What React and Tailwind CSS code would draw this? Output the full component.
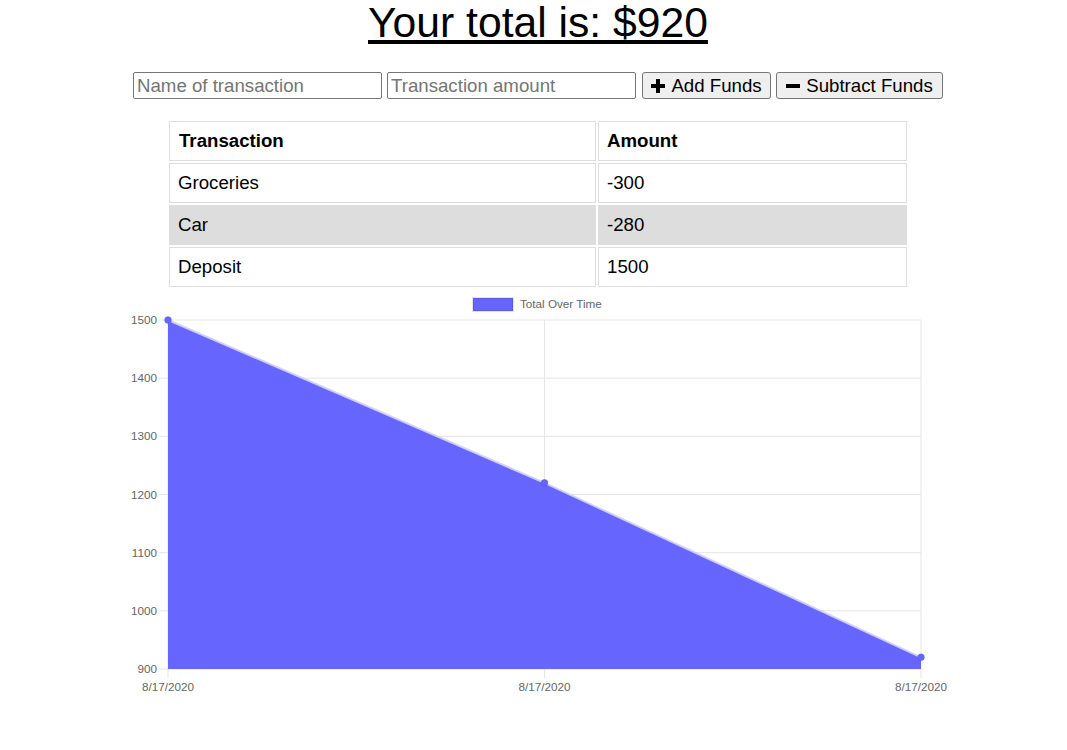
import React from 'react'

const transactions = [
  { name: 'Groceries', value: -300 },
  { name: 'Car', value: -280 },
  { name: 'Deposit', value: 1500 }
]

// chart geometry in page pixels
const left = 168
const right = 921
const top = 320
const bottom = 669
const yMin = 900
const yMax = 1500
const yPos = (v) => bottom - ((v - yMin) / (yMax - yMin)) * (bottom - top)

function Chart() {
  const totals = [1500, 1220, 920]
  const xs = [left, (left + right) / 2, right]
  const ticks = [1500, 1400, 1300, 1200, 1100, 1000, 900]
  const pts = totals.map((v, i) => [xs[i], yPos(v)])
  const area = [...pts, [right, bottom], [left, bottom]].map((p) => p.join(',')).join(' ')
  const line = pts.map((p) => p.join(',')).join(' ')

  return (
    <svg
      viewBox="100 290 876 420"
      className="block w-[876px] h-[420px] mx-auto"
      style={{ fontFamily: '"Liberation Sans", Arial, sans-serif' }}
    >
      {/* legend */}
      <rect x="473" y="298" width="40" height="13" fill="#6666ff" stroke="rgba(0,0,0,0.1)" strokeWidth="2" />
      <text x="520" y="308" fontSize="11.7" fill="#666">Total Over Time</text>

      {/* grid */}
      {ticks.map((t) => (
        <g key={t}>
          <line x1="159" x2={right} y1={yPos(t)} y2={yPos(t)} stroke="#e5e5e5" strokeWidth="1" />
          <text x="157" y={yPos(t) + 4} fontSize="11.7" fill="#666" textAnchor="end">{t}</text>
        </g>
      ))}
      {xs.map((x, i) => (
        <g key={i}>
          <line x1={x} x2={x} y1={top} y2={bottom + 9} stroke="#e5e5e5" strokeWidth="1" />
          <text x={x} y="691" fontSize="11.7" fill="#666" textAnchor="middle">8/17/2020</text>
        </g>
      ))}

      {/* data */}
      <polygon points={area} fill="#6666ff" />
      <polyline points={line} fill="none" stroke="rgba(210,210,245,0.9)" strokeWidth="2" />
      {pts.map((p, i) => (
        <circle key={i} cx={p[0]} cy={p[1]} r="3.5" fill="#6666ff" stroke="rgba(0,0,0,0.08)" strokeWidth="1" />
      ))}
    </svg>
  )
}

function PlusIcon() {
  return (
    <svg width="14" height="14" viewBox="0 0 14 14">
      <rect x="5" y="0" width="4" height="14" fill="#000" />
      <rect x="0" y="5" width="14" height="4" fill="#000" />
    </svg>
  )
}

function MinusIcon() {
  return (
    <svg width="14" height="14" viewBox="0 0 14 14">
      <rect x="0" y="5" width="14" height="4" fill="#000" />
    </svg>
  )
}

export default function App() {
  return (
    <div className="w-full min-h-[750px] bg-white pl-[9px] text-black font-['Liberation_Sans',Arial,sans-serif]">
      {/* Header */}
      <h1 className="text-center text-[42.67px] leading-[44px] font-normal">
        <span className="underline">Your total is: $920</span>
      </h1>

      {/* Form */}
      <div className="mt-[28px] flex justify-center items-center gap-[5px] text-[18.67px]">
        <input
          type="text"
          placeholder="Name of transaction"
          className="w-[249px] h-[27px] border border-[#767676] rounded-[2px] px-[3px] outline-none placeholder:text-[#757575]"
        />
        <input
          type="number"
          placeholder="Transaction amount"
          className="w-[249px] h-[27px] border border-[#767676] rounded-[2px] px-[3px] outline-none placeholder:text-[#757575]"
        />
        <button className="ml-px w-[129px] h-[27px] flex items-center justify-center gap-[6px] bg-[#efefef] border border-[#767676] rounded-[3px]">
          <PlusIcon />
          <span>Add Funds</span>
        </button>
        <button className="w-[167px] h-[27px] flex items-center justify-center gap-[6px] bg-[#efefef] border border-[#767676] rounded-[3px]">
          <MinusIcon />
          <span>Subtract Funds</span>
        </button>
      </div>

      {/* Table */}
      <div className="mt-[22px] mx-auto w-[738px] grid grid-cols-[427px_309px] gap-[2px] text-[18.67px]">
        <div className="h-[40px] border border-[#dddddd] flex items-center px-[9px] font-bold">Transaction</div>
        <div className="h-[40px] border border-[#dddddd] flex items-center px-[8px] font-bold">Amount</div>
        {transactions.map((t, i) => {
          const bg = i === 1 ? 'bg-[#dddddd]' : 'bg-white'
          return (
            <React.Fragment key={t.name}>
              <div className={`h-[40px] border border-[#dddddd] flex items-center px-[8px] ${bg}`}>{t.name}</div>
              <div className={`h-[40px] border border-[#dddddd] flex items-center px-[8px] ${bg}`}>{t.value}</div>
            </React.Fragment>
          )
        })}
      </div>

      {/* Chart */}
      <div className="mt-[3px]">
        <Chart />
      </div>
    </div>
  )
}
